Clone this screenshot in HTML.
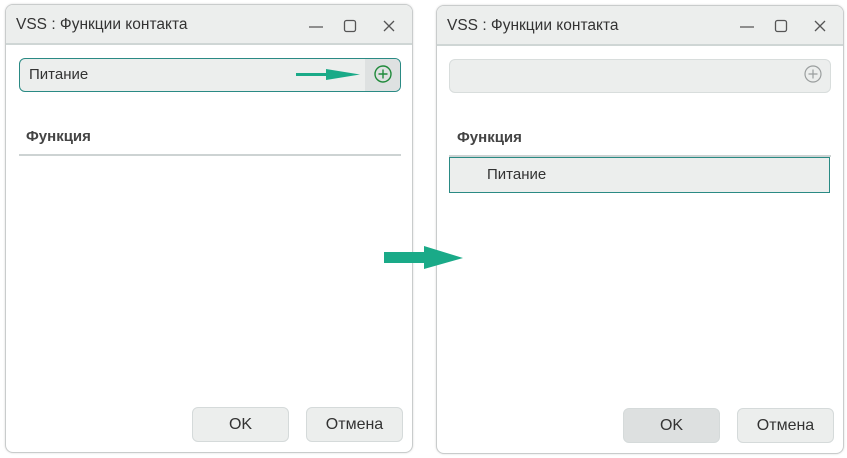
<!DOCTYPE html><html><head><meta charset="utf-8"><style>
body{margin:0;width:847px;height:458px;background:#fff;position:relative;overflow:hidden;font-family:"Liberation Sans",sans-serif;color:#333}
.win{position:absolute;border:1px solid #c9cccc;border-radius:8px;background:#fff;overflow:hidden;box-shadow:0 0 2px rgba(0,0,0,.15)}
.tb{position:absolute;left:0;right:0;top:0;height:38px;background:#eceeed;border-bottom:2px solid #cfd6d5}
.tt{position:absolute;left:10px;top:11px;font-size:15.5px;color:#333}
.inp{position:absolute;height:34px;background:#eceeed;border-radius:6px;box-sizing:border-box}
.hd{position:absolute;font-size:15px;font-weight:bold;color:#444}
.ln{position:absolute;height:2px;background:#cdd3d3}
.btn{position:absolute;width:97px;height:35px;border:1px solid #d5dada;border-radius:6px;background:#eceeed;box-sizing:border-box;text-align:center;line-height:33px;font-size:16px;color:#333}
</style></head><body>
<div class="win" style="left:5px;top:4px;width:406px;height:447px">
 <div class="tb"></div><div class="tt">VSS : Функции контакта</div>
 <svg style="position:absolute;left:300px;top:14px" width="100" height="16"><path d="M3 8H17" stroke="#555" stroke-width="1.3"/><rect x="38.5" y="1.5" width="11" height="11" rx="2" fill="none" stroke="#555" stroke-width="1.3"/><path d="M78 2L88 12M88 2L78 12" stroke="#555" stroke-width="1.3"/></svg>
 <div class="inp" style="left:13px;top:53px;width:382px;border:1px solid #2a8a84"></div>
 <div style="position:absolute;left:359px;top:54px;width:35px;height:32px;background:#dee1e1;border-radius:0 5px 5px 0"></div>
 <svg style="position:absolute;left:367px;top:59px" width="20" height="20"><circle cx="10" cy="10" r="8" fill="none" stroke="#1f8a3a" stroke-width="1.4"/><path d="M10 5.5V14.5M5.5 10H14.5" stroke="#1f8a3a" stroke-width="1.4"/></svg>
 <div style="position:absolute;left:23px;top:61px;font-size:15px">Питание</div>
 <svg style="position:absolute;left:290px;top:64px" width="66" height="12"><path d="M0 4H30V0L64 5.5L30 11V7H0Z" fill="#1aaa88"/></svg>
 <div class="hd" style="left:20px;top:123px">Функция</div>
 <div class="ln" style="left:13px;top:149px;width:382px"></div>
 <div class="btn" style="left:186px;top:402px">OK</div>
 <div class="btn" style="left:300px;top:402px">Отмена</div>
</div>
<div class="win" style="left:436px;top:5px;width:406px;height:447px">
 <div class="tb"></div><div class="tt">VSS : Функции контакта</div>
 <svg style="position:absolute;left:300px;top:13px" width="100" height="16"><path d="M3 8H17" stroke="#555" stroke-width="1.3"/><rect x="38.5" y="1.5" width="11" height="11" rx="2" fill="none" stroke="#555" stroke-width="1.3"/><path d="M78 2L88 12M88 2L78 12" stroke="#555" stroke-width="1.3"/></svg>
 <div class="inp" style="left:12px;top:53px;width:382px;border:1px solid #d8dddc"></div>
 <svg style="position:absolute;left:366px;top:58px" width="20" height="20"><circle cx="10" cy="10" r="8" fill="none" stroke="#9a9e9e" stroke-width="1.2"/><path d="M10 5.5V14.5M5.5 10H14.5" stroke="#9a9e9e" stroke-width="1.2"/></svg>
 <div class="hd" style="left:20px;top:123px">Функция</div>
 <div class="ln" style="left:12px;top:149px;width:382px"></div>
 <div style="position:absolute;left:12px;top:151px;width:381px;height:36px;background:#eceeed;border:1px solid #2a8a84;box-sizing:border-box"></div>
 <div style="position:absolute;left:50px;top:160px;font-size:15px">Питание</div>
 <div class="btn" style="left:186px;top:402px;background:#dde0e0">OK</div>
 <div class="btn" style="left:300px;top:402px">Отмена</div>
</div>
<svg style="position:absolute;left:384px;top:246px" width="80" height="24"><path d="M0 6H40V0L79 12L40 23V17H0Z" fill="#1aaa88"/></svg>
</body></html>
